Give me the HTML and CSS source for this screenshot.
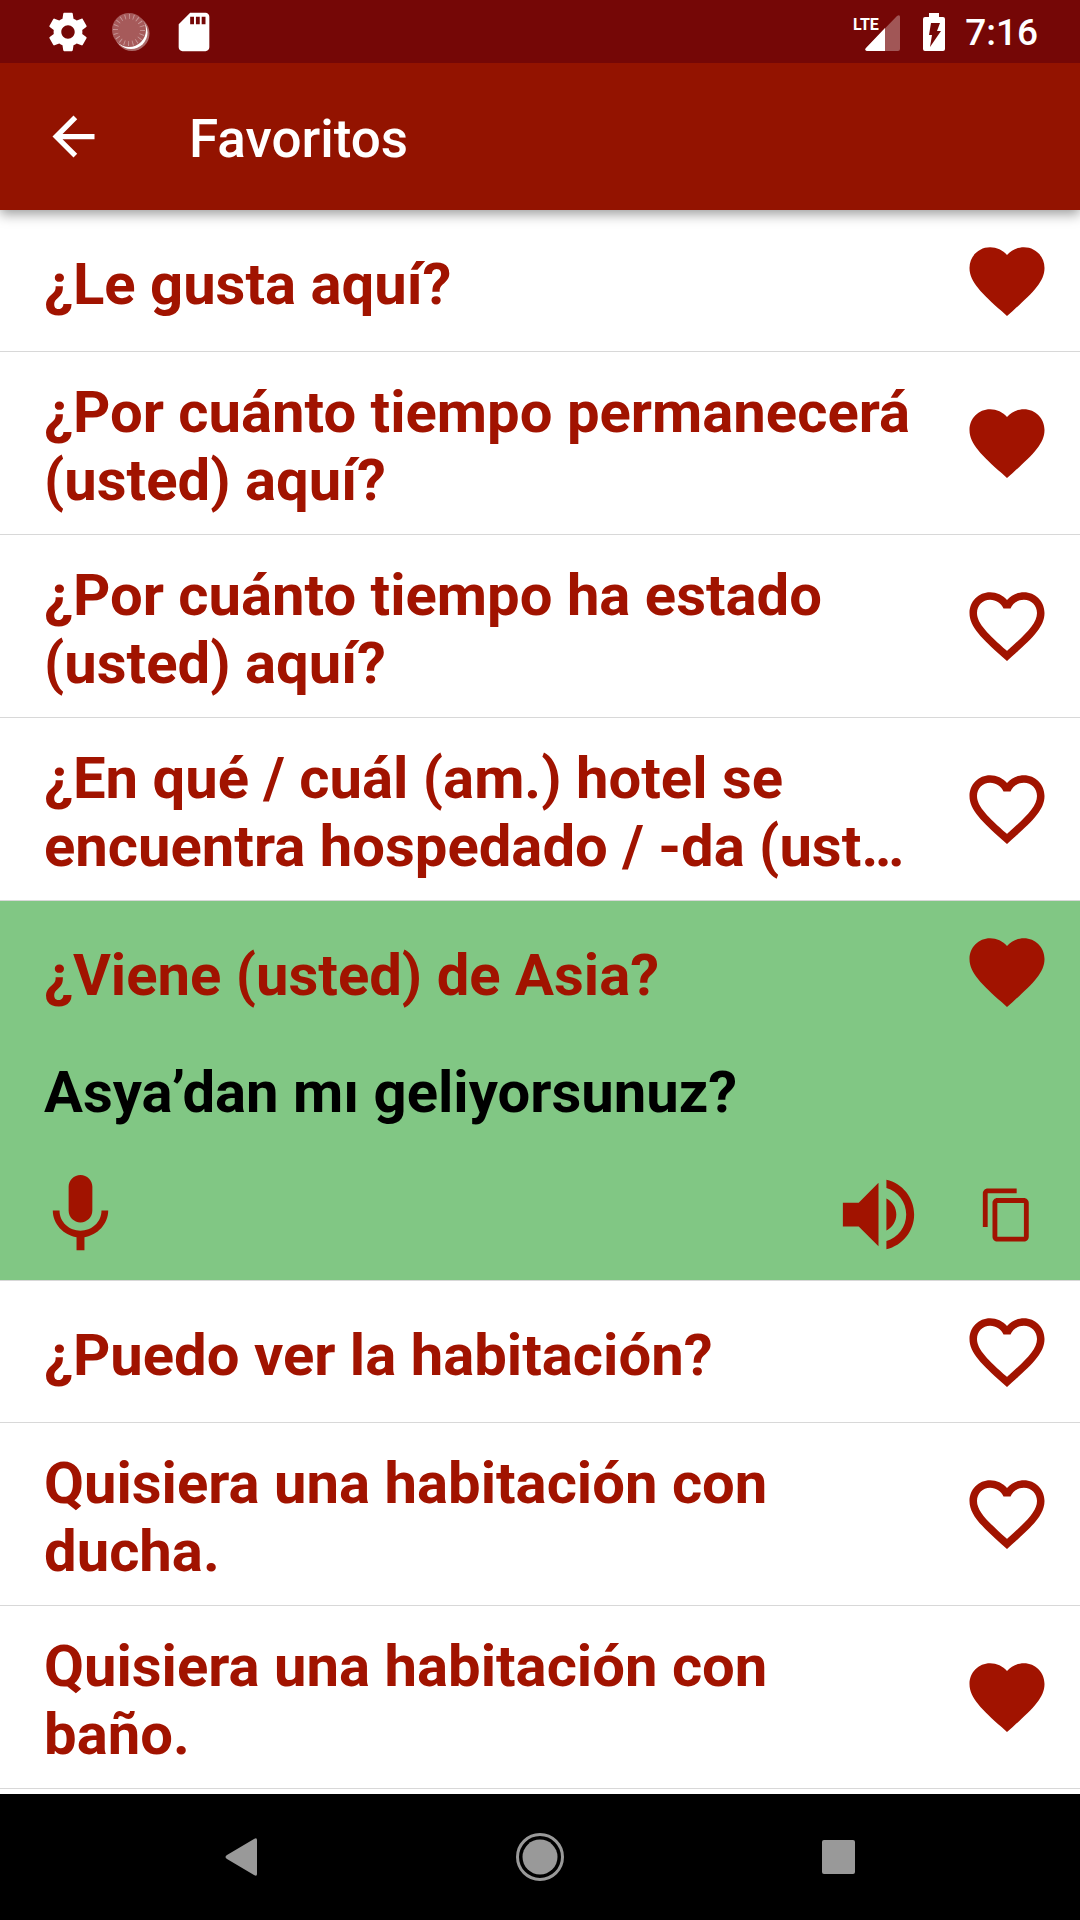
FILE: index.html
```html
<!DOCTYPE html>
<html lang="es">
<head>
<meta charset="utf-8">
<meta name="viewport" content="width=device-width, initial-scale=1">
<title>Favoritos</title>
<link rel="stylesheet" href="styles.css">
</head>
<body>
<svg class="sprite" aria-hidden="true">
  <symbol id="heart-full" viewBox="0 0 24 24"><path d="M12 21.35l-1.45-1.32C5.4 15.36 2 12.28 2 8.5 2 5.42 4.42 3 7.5 3c1.74 0 3.41.81 4.5 2.09C13.09 3.81 14.76 3 16.5 3 19.58 3 22 5.42 22 8.5c0 3.78-3.4 6.86-8.55 11.54L12 21.35z"/></symbol>
  <symbol id="heart-line" viewBox="0 0 24 24"><path d="M16.5 3c-1.74 0-3.41.81-4.5 2.09C10.91 3.81 9.24 3 7.5 3 4.42 3 2 5.42 2 8.5c0 3.78 3.4 6.86 8.55 11.54L12 21.35l1.45-1.32C18.6 15.36 22 12.28 22 8.5 22 5.42 19.58 3 16.5 3zm-4.4 15.55l-.1.1-.1-.1C7.14 14.24 4 11.39 4 8.5 4 6.5 5.5 5 7.5 5c1.540 0 3.040.990 3.570 2.360h1.870C13.460 5.990 14.960 5 16.500 5c2 0 3.500 1.500 3.500 3.500 0 2.890-3.140 5.740-7.900 10.050z"/></symbol>
</svg>

<header class="top">
  <div class="status">
    <div class="status-notices">
      <svg class="status-icon" viewBox="0 0 24 24" aria-hidden="true"><path d="M19.43 12.98c.04-.32.07-.64.07-.98s-.03-.66-.07-.98l2.11-1.65c.19-.15.24-.42.12-.64l-2-3.46c-.12-.22-.39-.3-.61-.22l-2.49 1c-.52-.4-1.08-.73-1.69-.98l-.38-2.65C14.46 2.18 14.25 2 14 2h-4c-.25 0-.46.18-.49.42l-.38 2.65c-.61.25-1.17.59-1.69.98l-2.49-1c-.23-.09-.49 0-.61.22l-2 3.46c-.13.22-.07.49.12.64l2.11 1.65c-.04.32-.07.65-.07.98s.03.66.07.98l-2.11 1.65c-.19.15-.24.42-.12.64l2 3.46c.12.22.39.3.61.22l2.49-1c.52.4 1.08.73 1.69.98l.38 2.65c.03.24.24.42.49.42h4c.25 0 .46-.18.49-.42l.38-2.65c.61-.25 1.17-.59 1.69-.98l2.49 1c.23.09.49 0 .61-.22l2-3.46c.12-.22.07-.49-.12-.64l-2.11-1.65zM12 15.5c-1.93 0-3.5-1.57-3.5-3.5s1.57-3.5 3.5-3.5 3.5 1.57 3.5 3.5-1.57 3.5-3.5 3.5z"/></svg>
      <svg class="status-icon" viewBox="0 0 46 46" aria-hidden="true">
        <circle cx="24" cy="24.5" r="17.5" opacity=".4"/>
        <circle cx="23" cy="23.5" r="16.5"/>
        <circle class="sync-disc" cx="21" cy="21" r="17"/>
        <circle class="sync-ticks" cx="21" cy="21" r="13.5" pathLength="200"/>
      </svg>
      <svg class="status-icon" viewBox="0 0 24 24" aria-hidden="true"><path d="M18 2h-8L4.02 8 4 20c0 1.1.9 2 2 2h12c1.1 0 2-.9 2-2V4c0-1.1-.9-2-2-2zm-6 6h-2V4h2v4zm3 0h-2V4h2v4zm3 0h-2V4h2v4z"/></svg>
    </div>
    <div class="status-system">
      <svg class="signal" viewBox="0 0 48 38" aria-label="LTE">
        <path d="M45 3q3-2 3 1v32q0 2-2 2H15q-3-1-1-3z" opacity=".32"/>
        <path d="M33 15v23H15q-3-1-1-3z"/>
        <text class="signal-label" x="1" y="17">LTE</text>
      </svg>
      <svg class="battery" viewBox="0 0 22 38" aria-hidden="true"><path fill-rule="evenodd" d="M6 0h10v4h4q2 0 2 2v30q0 2-2 2H2q-2 0-2-2V6q0-2 2-2h4zM8 10L6 22h3L7 34 18 18h-4l3-8z"/></svg>
      <time class="clock">7:16</time>
    </div>
  </div>
  <div class="appbar">
    <button class="icon-button" type="button" aria-label="Atrás"><svg class="back-icon" viewBox="0 0 24 24" aria-hidden="true"><path d="M20 11H7.830l5.590-5.590L12 4l-8 8 8 8 1.410-1.410L7.830 13H20v-2z"/></svg></button>
    <h1 class="title">Favoritos</h1>
  </div>
</header>

<main class="content">
  <ul class="phrases">
    <li class="item"><div class="row"><p class="phrase">¿Le gusta aquí?</p><button class="icon-button" type="button" aria-label="Favorito" aria-pressed="true"><svg class="heart" aria-hidden="true"><use href="#heart-full"/></svg></button></div></li>
    <li class="item"><div class="row"><p class="phrase">¿Por cuánto tiempo permanecerá (usted) aquí?</p><button class="icon-button" type="button" aria-label="Favorito" aria-pressed="true"><svg class="heart" aria-hidden="true"><use href="#heart-full"/></svg></button></div></li>
    <li class="item"><div class="row"><p class="phrase">¿Por cuánto tiempo ha estado (usted) aquí?</p><button class="icon-button" type="button" aria-label="Favorito" aria-pressed="false"><svg class="heart" aria-hidden="true"><use href="#heart-line"/></svg></button></div></li>
    <li class="item"><div class="row"><p class="phrase">¿En qué / cuál (am.) hotel se encuentra hospedado / -da (ust…</p><button class="icon-button" type="button" aria-label="Favorito" aria-pressed="false"><svg class="heart" aria-hidden="true"><use href="#heart-line"/></svg></button></div></li>
    <li class="item item-open">
      <div class="row"><p class="phrase">¿Viene (usted) de Asia?</p><button class="icon-button" type="button" aria-label="Favorito" aria-pressed="true"><svg class="heart" aria-hidden="true"><use href="#heart-full"/></svg></button></div>
      <p class="translation" lang="tr">Asya’dan mı geliyorsunuz?</p>
      <div class="actions">
        <button class="icon-button action-record" type="button" aria-label="Grabar"><svg class="action-icon" viewBox="0 0 24 24" aria-hidden="true"><path d="M12 14c1.660 0 2.990-1.340 2.990-3L15 5c0-1.660-1.340-3-3-3S9 3.340 9 5v6c0 1.660 1.340 3 3 3zm5.300-3c0 3-2.540 5.100-5.300 5.100S6.700 14 6.700 11H5c0 3.410 2.720 6.230 6 6.720V21h2v-3.280c3.280-.48 6-3.300 6-6.720h-1.700z"/></svg></button>
        <button class="icon-button" type="button" aria-label="Escuchar"><svg class="action-icon" viewBox="0 0 24 24" aria-hidden="true"><path d="M3 9v6h4l5 5V4L7 9H3zm13.500 3c0-1.770-1.020-3.290-2.500-4.030v8.050c1.480-.73 2.500-2.250 2.500-4.020zM14 3.230v2.060c2.890.86 5 3.540 5 6.710s-2.110 5.850-5 6.710v2.060c4.010-.91 7-4.490 7-8.770s-2.990-7.860-7-8.770z"/></svg></button>
        <button class="icon-button action-copy" type="button" aria-label="Copiar"><svg class="copy-icon" viewBox="0 0 24 24" aria-hidden="true"><path d="M16 1H4c-1.100 0-2 .9-2 2v14h2V3h12V1zm3 4H8c-1.100 0-2 .9-2 2v14c0 1.100.9 2 2 2h11c1.100 0 2-.9 2-2V7c0-1.100-.9-2-2-2zm0 16H8V7h11v14z"/></svg></button>
      </div>
    </li>
    <li class="item"><div class="row"><p class="phrase">¿Puedo ver la habitación?</p><button class="icon-button" type="button" aria-label="Favorito" aria-pressed="false"><svg class="heart" aria-hidden="true"><use href="#heart-line"/></svg></button></div></li>
    <li class="item"><div class="row"><p class="phrase">Quisiera una habitación con ducha.</p><button class="icon-button" type="button" aria-label="Favorito" aria-pressed="false"><svg class="heart" aria-hidden="true"><use href="#heart-line"/></svg></button></div></li>
    <li class="item"><div class="row"><p class="phrase">Quisiera una habitación con baño.</p><button class="icon-button" type="button" aria-label="Favorito" aria-pressed="true"><svg class="heart" aria-hidden="true"><use href="#heart-full"/></svg></button></div></li>
  </ul>
</main>

<nav class="navbar" aria-label="Sistema">
  <button class="icon-button nav-button" type="button" aria-label="Atrás"><svg class="nav-icon" viewBox="0 0 48 48" aria-hidden="true"><path d="M37 6q3-2 3 1v34q0 3-3 1L10 26q-3-2 0-4z"/></svg></button>
  <button class="icon-button nav-button" type="button" aria-label="Inicio"><svg class="nav-icon" viewBox="0 0 48 48" aria-hidden="true"><circle cx="24" cy="24" r="17.5"/><circle class="home-ring" cx="24" cy="24" r="22.5"/></svg></button>
  <button class="icon-button nav-button" type="button" aria-label="Recientes"><svg class="nav-icon" viewBox="0 0 48 48" aria-hidden="true"><rect x="7" y="7" width="33" height="34" rx="2"/></svg></button>
</nav>
</body>
</html>
```
FILE: styles.css
```css
:root {
  --red: #a11300;
  --bar: #931300;
  --status: #750706;
  --green: #81c784;
  --line: #d8d8d8;
}

* { box-sizing: border-box; }

body {
  display: flex;
  flex-direction: column;
  min-height: 100vh;
  margin: 0;
  background: #fff;
  color: var(--red);
  font-family: Roboto, "Noto Sans", sans-serif;
}

h1, p, ul {
  margin: 0;
  padding: 0;
}

svg {
  display: block;
  flex: none;
  fill: currentColor;
}

.sprite {
  position: absolute;
  width: 0;
  height: 0;
}

.icon-button {
  display: flex;
  align-items: center;
  justify-content: center;
  flex: none;
  padding: 0;
  border: 0;
  background: none;
  color: inherit;
  cursor: pointer;
}

/* Status bar and app bar */
.top {
  position: relative;
  color: #fff;
  box-shadow: 0 4px 12px rgba(0, 0, 0, 0.4);
}

.status {
  display: flex;
  align-items: center;
  justify-content: space-between;
  height: 63px;
  padding: 0 42px 0 45px;
  background: var(--status);
}

.status-notices {
  display: flex;
  gap: 17px;
}

.status-system {
  display: flex;
  align-items: center;
}

.status-icon {
  width: 46px;
  height: 46px;
}

.sync-disc { fill: #a65a5a; }

.sync-ticks {
  fill: none;
  stroke: #c99a9a;
  stroke-width: 5;
  stroke-dasharray: 2 8;
}

.signal {
  width: 48px;
  height: 38px;
  margin-right: 23px;
}

.signal-label {
  font: bold 16px "Liberation Sans Narrow", Roboto, sans-serif;
}

.battery {
  width: 22px;
  height: 38px;
  margin-right: 20px;
}

.clock {
  padding-top: 2px;
  font-size: 37px;
  font-weight: 500;
  line-height: 44px;
}

.appbar {
  display: flex;
  align-items: center;
  gap: 84px;
  height: 147px;
  padding: 0 42px;
  background: var(--bar);
}

.back-icon {
  width: 63px;
  height: 63px;
}

.title {
  padding-top: 4px;
  font-size: 53px;
  font-weight: 500;
  line-height: 64px;
}

/* Phrase list */
.content { flex: 1; }

.phrases { list-style: none; }

.item { border-bottom: 1px solid var(--line); }

.item-open { background: var(--green); }

.row {
  display: flex;
  align-items: center;
  gap: 42px;
  min-height: 141px;
  padding: 20px 28px 20px 44px;
}

.phrase,
.translation {
  font-size: 58px;
  font-weight: 700;
  line-height: 68px;
}

.phrase {
  flex: 1;
  min-width: 0;
  padding-top: 6px;
}

.translation {
  padding: 16px 44px 0;
  color: #000;
}

.heart {
  width: 90px;
  height: 90px;
}

.actions {
  display: flex;
  align-items: center;
  padding: 41px 28px 18px 33px;
}

.action-record { margin-right: auto; }

.action-icon {
  width: 95px;
  height: 95px;
}

.action-copy {
  width: 90px;
  margin-left: 36px;
}

.copy-icon {
  width: 58px;
  height: 58px;
}

/* System navigation */
.navbar {
  display: flex;
  height: 126px;
  padding: 0 92px;
  background: #000;
  color: #999;
}

.nav-button { flex: 1; }

.nav-icon {
  width: 48px;
  height: 48px;
}

.home-ring {
  fill: none;
  stroke: currentColor;
  stroke-width: 3;
}
```
